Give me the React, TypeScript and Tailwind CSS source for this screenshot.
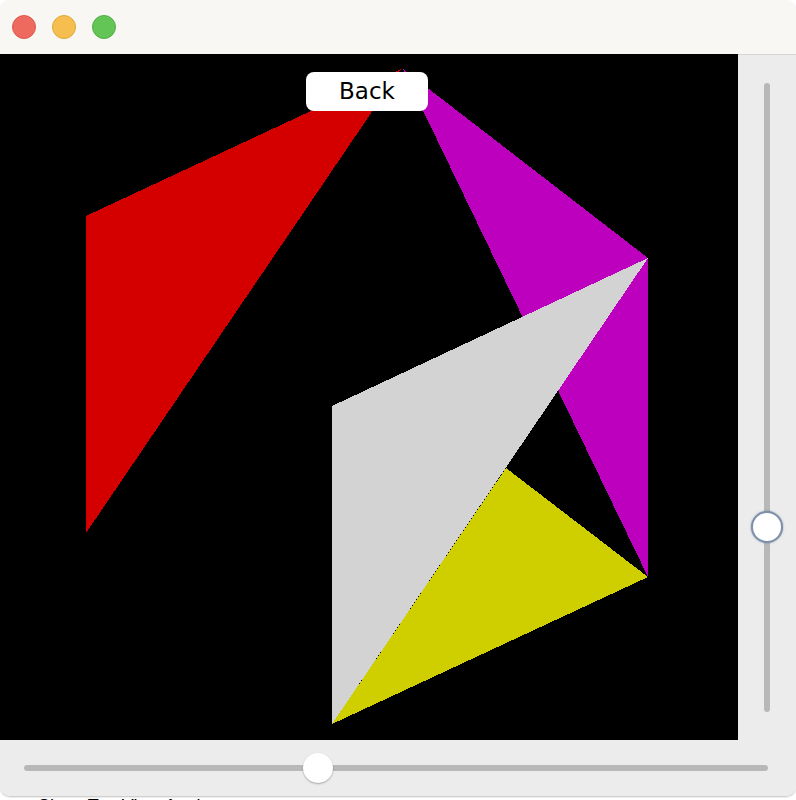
import React from 'react';

const shapes = [
  { points: '86,162 401,15 86,479', fill: '#d40000' },
  { points: '403,15 648,204 648,523', fill: '#bd00bd' },
  { points: '332,352 648,204 332,670', fill: '#d3d3d3' },
  { points: '506,414 648,523 332,670', fill: '#cfcf00' },
];

const App: React.FC = () => {
  return (
    <div className="w-[796px] h-[800px] overflow-hidden bg-white" style={{ fontFamily: '"DejaVu Sans", sans-serif' }}>
      {/* Window */}
      <div className="flex flex-col rounded-t-[10px] rounded-b-[10px] overflow-hidden shadow-[0_1px_2px_rgba(0,0,0,0.25)]">
        {/* Title bar */}
        <div className="h-[54px] bg-[#f9f7f3] flex items-center gap-4 pl-3">
          <span className="w-6 h-6 rounded-full bg-[#ee6a5f] border border-[#dd5a50]" />
          <span className="w-6 h-6 rounded-full bg-[#f5be4f] border border-[#dfa63a]" />
          <span className="w-6 h-6 rounded-full bg-[#62c555] border border-[#54ad48]" />
        </div>

        <div className="flex">
          {/* Canvas */}
          <div className="relative w-[738px] h-[686px] bg-black">
            <svg width="738" height="686" viewBox="0 0 738 686" shapeRendering="crispEdges">
              {shapes.map((s, i) => (
                <polygon key={i} points={s.points} fill={s.fill} />
              ))}
            </svg>
            <button className="absolute left-[306px] top-[18px] w-[122px] h-[39px] bg-white rounded-[8px] text-[23px] text-black leading-none">
              Back
            </button>
          </div>

          {/* Vertical slider */}
          <div className="w-[58px] h-[686px] bg-[#ececec] border-t border-[#d6d6d6] flex justify-center py-[28px]">
            <div className="relative w-[6px] h-full bg-[#b8b8b8] rounded-sm">
              <div className="absolute left-1/2 top-[444px] -translate-x-1/2 -translate-y-1/2 w-[32px] h-[32px] rounded-full bg-white border-2 border-[#7d90a8] shadow-[0_0_2px_rgba(60,90,130,0.6)]" />
            </div>
          </div>
        </div>

        {/* Horizontal slider */}
        <div className="h-[56px] bg-[#ececec] flex items-center pl-[24px] pr-[28px]">
          <div className="relative w-full h-[6px] bg-[#b8b8b8] rounded-sm">
            <div className="absolute left-[294px] top-1/2 -translate-x-1/2 -translate-y-1/2 w-[30px] h-[30px] rounded-full bg-white shadow-[0_1px_2px_rgba(0,0,0,0.3)]" />
          </div>
        </div>
      </div>

      <div className="pl-[38px] pt-[1px] text-[18px] text-black leading-none" style={{ fontFamily: '"Liberation Sans", sans-serif' }}>
        Show Top View Angle
      </div>
    </div>
  );
};

export default App;
